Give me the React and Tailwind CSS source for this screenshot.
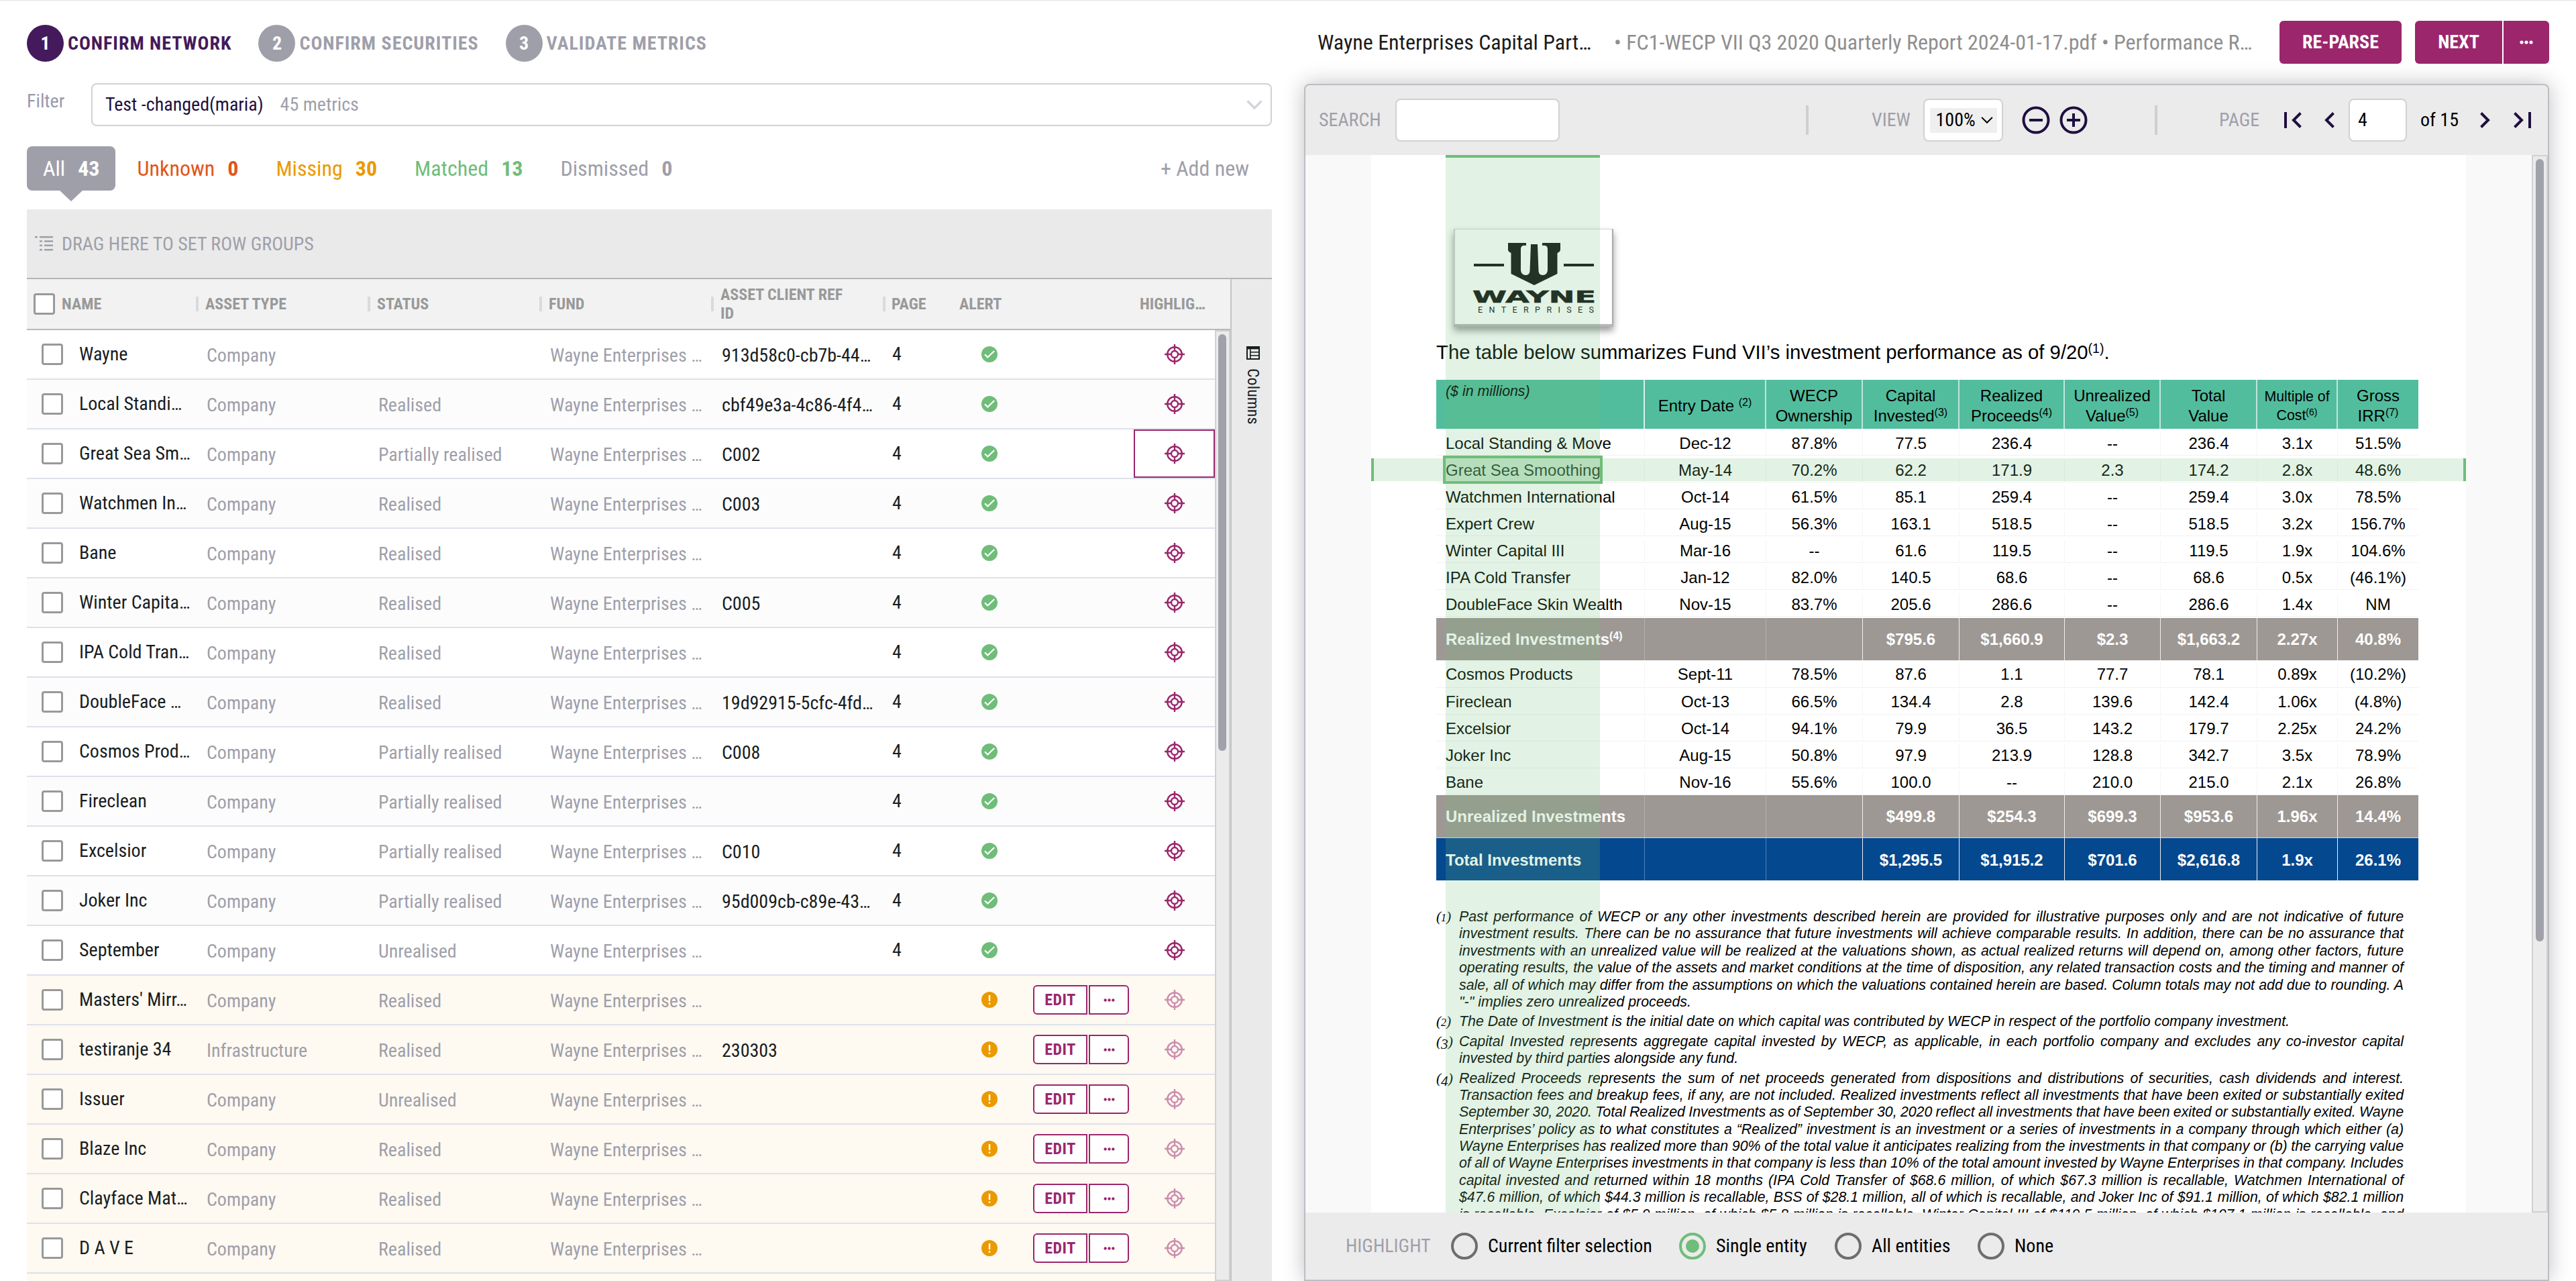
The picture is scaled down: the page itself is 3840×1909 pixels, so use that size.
import React from "react";

const COND = "font-['Roboto_Condensed',Roboto,sans-serif]";
const PDF = "font-['Liberation_Sans',Arial,sans-serif]";

/* ---------- icons ---------- */

const Dots = ({ className }) => (
  <svg viewBox="0 0 20 6" className={className} fill="currentColor">
    <circle cx="3" cy="3" r="2.6" />
    <circle cx="10" cy="3" r="2.6" />
    <circle cx="17" cy="3" r="2.6" />
  </svg>
);

const Target = ({ faded }) => (
  <svg
    viewBox="0 0 30 30"
    className={faded ? "size-[30px] text-[#9b266c] opacity-50" : "size-[30px] text-[#9b266c]"}
    fill="none"
    stroke="currentColor"
    strokeWidth="2.4"
  >
    <circle cx="15" cy="15" r="10.8" />
    <circle cx="15" cy="15" r="5" />
    <path d="M15 0v9.5M15 20.5v9.5M0 15h9.5M20.5 15h9.5" />
  </svg>
);

const Matched = () => (
  <svg viewBox="0 0 24 24" className="size-6">
    <circle cx="12" cy="12" r="12" fill="#6fbd79" />
    <path d="M5 12.2l4.300 4.300L19.200 7" fill="none" stroke="#fff" strokeWidth="2.200" />
  </svg>
);

const Missing = () => (
  <svg viewBox="0 0 24 24" className="size-6">
    <circle cx="12" cy="12" r="12" fill="#ea9a00" />
    <path d="M12 5v9M12 16.200v2.600" fill="none" stroke="#fff" strokeWidth="2.400" />
  </svg>
);

const ChevronDown = ({ className, width }) => (
  <svg viewBox="0 0 24 16" className={className} fill="none" stroke="currentColor" strokeWidth={width}>
    <path d="M1.500 2.500L12 13 22.500 2.500" />
  </svg>
);

const Chevron = ({ dir, bar }) => (
  <svg
    viewBox={bar ? "0 0 26 26" : "0 0 16 26"}
    className={bar ? "w-[26px] h-[26px] shrink-0 text-[#1f0f40]" : "w-[16px] h-[26px] shrink-0 text-[#1f0f40]"}
    fill="none"
    stroke="currentColor"
    strokeWidth="4"
  >
    {bar && dir === "left" && <path d="M2 1v24M24.500 2.500L14 13l10.500 10.500" />}
    {bar && dir === "right" && <path d="M24 1v24M1.500 2.500L12 13 1.500 23.500" />}
    {!bar && dir === "left" && <path d="M14.500 2.500L4 13l10.500 10.500" />}
    {!bar && dir === "right" && <path d="M1.500 2.500L12 13 1.500 23.500" />}
  </svg>
);

const Zoom = ({ plus }) => (
  <svg viewBox="0 0 42 42" className="size-[42px] shrink-0 text-[#1f0f40]" fill="none" stroke="currentColor" strokeWidth="4">
    <circle cx="21" cy="21" r="18.500" />
    <path d={plus ? "M11 21h20M21 11v20" : "M11 21h20"} />
  </svg>
);

const GroupIcon = () => (
  <svg viewBox="0 0 28 22" className="w-[28px] h-[22px] shrink-0" fill="#9f9faa">
    <path d="M0 0h4v2.500H0zM7 0h20v2.500H7zM7 6.200h4v2.500H7zM14 6.200h13v2.500H14zM7 12.600h4v2.500H7zM14 12.600h13v2.500H14zM7 19h4v2.500H7zM14 19h13v2.500H14z" />
  </svg>
);

const ColumnsIcon = () => (
  <svg viewBox="0 0 20 20" className="size-5" fill="none" stroke="#181d1f">
    <path d="M0 2.200h20" strokeWidth="4.400" />
    <path d="M1 3v16h18V3" strokeWidth="2" />
    <path d="M5 8.700h13M5 13.800h13M5.800 3v16" strokeWidth="1.600" />
  </svg>
);

const Logo = () => (
  <svg viewBox="0 0 238 146" className="w-[238px] h-[146px]" fill="#111">
    <path
      transform="translate(81 21)"
      d="M0 0H27V4Q19 3 19 9V41Q20 48 26 48Q32 48 32.500 42L34 2H44L45.500 42Q46 48 52 48Q58 48 59 41V9Q59 3 51 4V0H78V10Q78 13 73.500 15V46L39 63L4.500 46V15Q0 13 0 10Z"
    />
    <path d="M30 52h45v4H30zM164 52h45v4h-45z" />
    <text x="28" y="109.500" fontSize="24" fontWeight="700" fontFamily="'DejaVu Sans', sans-serif" textLength="184" lengthAdjust="spacingAndGlyphs" stroke="#111" strokeWidth="0.600">
      WAYNE
    </text>
    <text x="36" y="125" fontSize="12.500" fontFamily="Roboto, sans-serif" textLength="173">
      ENTERPRISES
    </text>
  </svg>
);

/* ---------- left panel ---------- */

const Step = ({ n, label, active }) => (
  <div className={`flex items-center text-[28px] font-bold tracking-[1px] ${active ? "text-[#441a5c]" : "text-[#9f9faa]"}`}>
    <span
      className={`flex size-[55px] items-center justify-center rounded-full tracking-normal text-white ${active ? "bg-[#441a5c]" : "bg-[#9f9faa]"}`}
    >
      {n}
    </span>
    <span className="ml-[6px]">{label}</span>
  </div>
);

const Tab = ({ label, count, color }) => (
  <div className={`flex h-full items-center gap-[19px] px-6 ${color}`}>
    <span>{label}</span>
    <b>{count}</b>
  </div>
);

const Checkbox = () => <span className="size-8 shrink-0 rounded-[4px] border-[3px] border-[#999] bg-white" />;

const Head = ({ className, sep, children }) => (
  <div className={`flex h-full shrink-0 items-center ${className}`}>
    <span className="min-w-0 flex-1">{children}</span>
    {sep && <span className="h-[22px] w-1 bg-[#dadada]" />}
  </div>
);

const F = "Wayne Enterprises …";
const rows = [
  ["Wayne", "Company", "", "913d58c0-cb7b-44…", true],
  ["Local Standi…", "Company", "Realised", "cbf49e3a-4c86-4f4…", true],
  ["Great Sea Sm…", "Company", "Partially realised", "C002", true],
  ["Watchmen In…", "Company", "Realised", "C003", true],
  ["Bane", "Company", "Realised", "", true],
  ["Winter Capita…", "Company", "Realised", "C005", true],
  ["IPA Cold Tran…", "Company", "Realised", "", true],
  ["DoubleFace …", "Company", "Realised", "19d92915-5cfc-4fd…", true],
  ["Cosmos Prod…", "Company", "Partially realised", "C008", true],
  ["Fireclean", "Company", "Partially realised", "", true],
  ["Excelsior", "Company", "Partially realised", "C010", true],
  ["Joker Inc", "Company", "Partially realised", "95d009cb-c89e-43…", true],
  ["September", "Company", "Unrealised", "", true],
  ["Masters' Mirr…", "Company", "Realised", "", false],
  ["testiranje 34", "Infrastructure", "Realised", "230303", false],
  ["Issuer", "Company", "Unrealised", "", false],
  ["Blaze Inc", "Company", "Realised", "", false],
  ["Clayface Mat…", "Company", "Realised", "", false],
  ["D A V E", "Company", "Realised", "", false],
];

const Row = ({ row, index }) => {
  const [name, type, status, ref, ok] = row;
  const bg = !ok ? "bg-[#fef9f1]" : index % 2 ? "bg-[#fcfcfc]" : "bg-white";
  return (
    <div className={`flex h-[74px] shrink-0 items-center whitespace-nowrap border-b-2 border-[#dde1ea] text-[28px] text-[#181d1f] ${bg}`}>
      <div className="flex w-[256px] shrink-0 items-center pl-[22px]">
        <Checkbox />
        <span className="ml-6">{name}</span>
      </div>
      <div className="w-[256px] shrink-0 pl-3 pt-[3px] text-[#9f9faa]">{type}</div>
      <div className="w-[256px] shrink-0 pl-3 pt-[3px] text-[#9f9faa]">{status}</div>
      <div className="w-[256px] shrink-0 pl-3 pt-[3px] text-[#9f9faa]">{F}</div>
      <div className="w-[256px] shrink-0 pl-3 pt-[3px]">{ref}</div>
      <div className="w-[100px] shrink-0 pl-[10px]">{ok ? "4" : ""}</div>
      <div className="flex w-[110px] shrink-0 justify-center">{ok ? <Matched /> : <Missing />}</div>
      <div className="w-[160px] shrink-0 pl-[10px]">
        {!ok && (
          <div className="flex h-11 text-[24px] font-bold text-[#9b266c]">
            <span className="flex w-[81px] items-center justify-center rounded-l-[6px] border-2 border-[#9b266c] bg-white tracking-[0.5px]">EDIT</span>
            <span className="ml-[2px] flex w-[60px] items-center justify-center rounded-r-[6px] border-2 border-[#9b266c] bg-white">
              <Dots className="h-[5px] w-[17px]" />
            </span>
          </div>
        )}
      </div>
      <div
        className={`flex h-full w-[121px] shrink-0 items-center justify-center ${index === 2 ? "border-2 border-[#9b266c]" : ""}`}
      >
        <Target faded={!ok} />
      </div>
    </div>
  );
};

const LeftPanel = () => (
  <div className="ml-10 flex h-full w-[1856px] shrink-0 flex-col">
    <div className="mt-[36px] flex h-[55px] shrink-0 gap-10">
      <Step n="1" label="CONFIRM NETWORK" active />
      <Step n="2" label="CONFIRM SECURITIES" />
      <Step n="3" label="VALIDATE METRICS" />
    </div>

    <div className="mt-8 flex h-16 shrink-0 text-[28px]">
      <span className="w-24 pt-[10px] text-[#9a98ab]">Filter</span>
      <div className="flex flex-1 items-center rounded-[8px] border-2 border-[#d2d2d4] pl-[19px] pr-3">
        <span className="text-[#1f0f40]">Test -changed(maria)</span>
        <span className="ml-[25px] text-[#9f9faa]">45 metrics</span>
        <ChevronDown className="ml-auto h-4 w-6 text-[#d6d4da]" width="3.5" />
      </div>
    </div>

    <div className="mt-[30px] flex h-[66px] shrink-0 items-center gap-2 text-[32px]">
      <div className="relative h-full rounded-[8px] bg-[#9f9faa]">
        <Tab label="All" count="43" color="text-white" />
        <svg viewBox="0 0 34 16" className="absolute left-[49px] top-[66px] h-4 w-[34px]" fill="#9f9faa">
          <path d="M0 0h34L17 16z" />
        </svg>
      </div>
      <Tab label="Unknown" count="0" color="text-[#e0561a]" />
      <Tab label="Missing" count="30" color="text-[#ea9a00]" />
      <Tab label="Matched" count="13" color="text-[#6fbd79]" />
      <Tab label="Dismissed" count="0" color="text-[#9f9faa]" />
      <span className="ml-auto mr-[34px] text-[#9f9faa]">+ Add new</span>
    </div>

    <div className="mt-7 flex h-[104px] shrink-0 items-center border-b-2 border-[#b4b4b4] bg-[#eaeaea] pl-3 text-[28px] text-[#9f9faa]">
      <GroupIcon />
      <span className="ml-3 pt-[1px]">DRAG HERE TO SET ROW GROUPS</span>
    </div>

    <div className="flex min-h-0 flex-1">
      <div className="flex w-[1794px] shrink-0 flex-col">
        <div className="flex h-[76px] shrink-0 items-center border-b-2 border-[#b9b9b9] bg-[#f2f2f2] text-[24px] font-bold leading-7 text-[#999]">
          <Head className="w-[256px] pl-[10px]" sep>
            <span className="flex items-center gap-[10px]">
              <Checkbox />
              NAME
            </span>
          </Head>
          <Head className="w-[256px] pl-[10px]" sep>ASSET TYPE</Head>
          <Head className="w-[256px] pl-[10px]" sep>STATUS</Head>
          <Head className="w-[256px] pl-[10px]" sep>FUND</Head>
          <Head className="w-[256px] pl-[10px]" sep>
            ASSET CLIENT REF
            <br />
            ID
          </Head>
          <Head className="w-[100px] pl-[9px]">PAGE</Head>
          <Head className="w-[270px] pl-[10px]">ALERT</Head>
          <Head className="w-[121px] pl-[9px]">HIGHLIG…</Head>
        </div>
        <div className="flex min-h-0 flex-1">
          <div className="flex w-[1771px] shrink-0 flex-col overflow-hidden">
            {rows.map((r, i) => (
              <Row key={r[0]} row={r} index={i} />
            ))}
            <div className="min-h-0 flex-1 bg-[#fef9f1]" />
          </div>
          <div className="flex-1 border-2 border-[#d1d1d3] bg-[#ebebeb] pl-[3px] pt-1">
            <div className="h-[621px] w-3 rounded-full bg-[#a1a1ab]" />
          </div>
        </div>
      </div>
      <div className="flex flex-1 flex-col items-center border-l-2 border-[#c4c4c4] bg-[#eaeaea] pl-1 pt-[100px]">
        <ColumnsIcon />
        <span className="mt-[13px] text-[24px] leading-[24px] text-[#181d1f] [writing-mode:vertical-rl]">Columns</span>
      </div>
    </div>
  </div>
);

/* ---------- document ---------- */

const W = ["w-[311px]", "w-[181px]", "w-[144px]", "w-[144px]", "w-[157px]", "w-[143px]", "w-[144px]", "w-[120px]", "w-[120px]"];

const DataRow = ({ cells, kind }) => {
  const style = {
    first: "h-10 pt-[6px]",
    top: "h-[41px] pt-[3px]",
    second: "h-10 pt-[3px]",
    gray: "h-[63px] bg-[#9e9894] font-bold text-white",
    gray2: "h-[64px] border-b border-[#d9d7d5] bg-[#9e9894] font-bold text-white",
    blue: "h-[63px] bg-[#04488f] font-bold text-white",
  }[kind];
  const strong = kind === "gray" || kind === "gray2";
  const line = strong ? "border-[#b5b0ad]" : kind === "blue" ? "border-[#4f7fb3]" : "border-[#f4f4f4]";
  const bright = kind === "blue" || strong ? "border-[#eeeeee]" : "border-[#f4f4f4]";
  const plain = !strong && kind !== "blue";
  return (
    <div className={`flex items-center ${style} ${plain ? "border-b border-[#f2f2f2]" : ""}`}>
      {cells.map((c, i) => (
        <div
          key={i}
          className={`flex h-full shrink-0 items-center ${i === 8 ? "" : "border-r"} ${i < 2 ? line : bright} ${W[i]} ${i === 0 ? "pl-[14px]" : "justify-center"} ${kind === "blue" ? "pt-[4px]" : strong ? "pt-[1px]" : ""}`}
        >
          <span>{c}</span>
        </div>
      ))}
    </div>
  );
};

const Sup = ({ children }) => <span className="relative -top-[8px] text-[16px] leading-none">{children}</span>;

const realized = [
  ["Local Standing & Move", "Dec-12", "87.8%", "77.5", "236.4", "--", "236.4", "3.1x", "51.5%"],
  ["Great Sea Smoothing", "May-14", "70.2%", "62.2", "171.9", "2.3", "174.2", "2.8x", "48.6%"],
  ["Watchmen International", "Oct-14", "61.5%", "85.1", "259.4", "--", "259.4", "3.0x", "78.5%"],
  ["Expert Crew", "Aug-15", "56.3%", "163.1", "518.5", "--", "518.5", "3.2x", "156.7%"],
  ["Winter Capital III", "Mar-16", "--", "61.6", "119.5", "--", "119.5", "1.9x", "104.6%"],
  ["IPA Cold Transfer", "Jan-12", "82.0%", "140.5", "68.6", "--", "68.6", "0.5x", "(46.1%)"],
  ["DoubleFace Skin Wealth", "Nov-15", "83.7%", "205.6", "286.6", "--", "286.6", "1.4x", "NM"],
];
const unrealized = [
  ["Cosmos Products", "Sept-11", "78.5%", "87.6", "1.1", "77.7", "78.1", "0.89x", "(10.2%)"],
  ["Fireclean", "Oct-13", "66.5%", "134.4", "2.8", "139.6", "142.4", "1.06x", "(4.8%)"],
  ["Excelsior", "Oct-14", "94.1%", "79.9", "36.5", "143.2", "179.7", "2.25x", "24.2%"],
  ["Joker Inc", "Aug-15", "50.8%", "97.9", "213.9", "128.8", "342.7", "3.5x", "78.9%"],
  ["Bane", "Nov-16", "55.6%", "100.0", "--", "210.0", "215.0", "2.1x", "26.8%"],
];

const HeadCell = ({ i, children, small }) => (
  <div
    className={`flex h-full shrink-0 items-center justify-center pt-[4px] text-center ${i === 8 ? "" : "border-r-2 border-[#bfe6da]"} ${W[i]} ${small ? "text-[21.330px] leading-[28px]" : "leading-[30px]"}`}
  >
    <div>{children}</div>
  </div>
);

const notes = [
  ["1", [
    "Past performance of WECP or any other investments described herein are provided for illustrative purposes only and are not indicative of future",
    "investment results. There can be no assurance that future investments will achieve comparable results. In addition, there can be no assurance that",
    "investments with an unrealized value will be realized at the valuations shown, as actual realized returns will depend on, among other factors, future",
    "operating results, the value of the assets and market conditions at the time of disposition, any related transaction costs and the timing and manner of",
    "sale, all of which may differ from the assumptions on which the valuations contained herein are based. Column totals may not add due to rounding. A",
    "\"-\" implies zero unrealized proceeds.",
  ]],
  ["2", ["The Date of Investment is the initial date on which capital was contributed by WECP in respect of the portfolio company investment."]],
  ["3", [
    "Capital Invested represents aggregate capital invested by WECP, as applicable, in each portfolio company and excludes any co-investor capital",
    "invested by third parties alongside any fund.",
  ]],
  ["4", [
    "Realized Proceeds represents the sum of net proceeds generated from dispositions and distributions of securities, cash dividends and interest.",
    "Transaction fees and breakup fees, if any, are not included. Realized investments reflect all investments that have been exited or substantially exited",
    "September 30, 2020. Total Realized Investments as of September 30, 2020 reflect all investments that have been exited or substantially exited. Wayne",
    "Enterprises’ policy as to what constitutes a “Realized” investment is an investment or a series of investments in a company through which either (a)",
    "Wayne Enterprises has realized more than 90% of the total value it anticipates realizing from the investments in that company or (b) the carrying value",
    "of all of Wayne Enterprises investments in that company is less than 10% of the total amount invested by Wayne Enterprises in that company. Includes",
    "capital invested and returned within 18 months (IPA Cold Transfer of $68.6 million, of which $67.3 million is recallable, Watchmen International of",
    "$47.6 million, of which $44.3 million is recallable, BSS of $28.1 million, all of which is recallable, and Joker Inc of $91.1 million, of which $82.1 million",
    "is recallable, Excelsior of $5.9 million, of which $5.8 million is recallable, Winter Capital III of $119.5 million, of which $107.1 million is recallable, and",
  ], true],
];

const Marker = ({ n }) => (
  <span className="w-[34px] shrink-0 font-['Liberation_Serif',serif]">
    (<span className={n < "3" ? "text-[16px] leading-none" : "relative top-[4px] leading-none"}>{n}</span>)
  </span>
);

const Document = () => (
  <div className={`relative w-[1632px] shrink-0 overflow-hidden bg-white pl-[97px] text-[24px] text-black ${PDF}`}>
    <div className="ml-[26px] mt-[110px] h-[146px] w-[238px] bg-white shadow-[0_6px_10px_rgba(0,0,0,0.4),inset_0_-4px_1px_#b5b5b5,inset_-2px_0_1px_#a8a8a8,inset_2px_0_1px_#cfcfcf,inset_0_1px_1px_#dddddd]">
      <Logo />
    </div>
    <p className="mt-[18px] h-10 whitespace-nowrap text-[29.300px] leading-10">
      The table below summarizes Fund VII’s investment performance as of 9/20
      <span className="relative -top-[9px] text-[19.500px] leading-none">(1)</span>.
    </p>

    <div className="mt-[21px] w-[1464px] whitespace-nowrap">
      <div className="flex h-[73px] bg-[#52bd9d]">
        <div className="w-[311px] shrink-0 border-r-2 border-[#d9f0e9] pl-[14px] pt-[3px] text-[21.330px] italic leading-[28px]">($ in millions)</div>
        <HeadCell i={1}>Entry Date <Sup>(2)</Sup></HeadCell>
        <HeadCell i={2}>WECP<br />Ownership</HeadCell>
        <HeadCell i={3}>Capital<br />Invested<Sup>(3)</Sup></HeadCell>
        <HeadCell i={4}>Realized<br />Proceeds<Sup>(4)</Sup></HeadCell>
        <HeadCell i={5}>Unrealized<br />Value<Sup>(5)</Sup></HeadCell>
        <HeadCell i={6}>Total<br />Value</HeadCell>
        <HeadCell i={7} small>Multiple of<br />Cost<span className="relative -top-[7px] text-[14px] leading-none">(6)</span></HeadCell>
        <HeadCell i={8}>Gross<br />IRR<Sup>(7)</Sup></HeadCell>
      </div>
      {realized.map((r) => (
        <DataRow key={r[0]} cells={r} kind="first" />
      ))}
      <div className="h-[2px]" />
      <DataRow
        kind="gray"
        cells={[<>Realized Investments<Sup>(4)</Sup></>, "", "", "$795.6", "$1,660.9", "$2.3", "$1,663.2", "2.27x", "40.8%"]}
      />
      {unrealized.map((r, i) => (
        <DataRow key={r[0]} cells={r} kind={i === 0 ? "top" : "second"} />
      ))}
      <DataRow kind="gray2" cells={["Unrealized Investments", "", "", "$499.8", "$254.3", "$699.3", "$953.6", "1.96x", "14.4%"]} />
      <DataRow kind="blue" cells={["Total Investments", "", "", "$1,295.5", "$1,915.2", "$701.6", "$2,616.8", "1.9x", "26.1%"]} />
    </div>

    <div className="mt-[42px] flex flex-col gap-[4px] text-[21.330px] italic leading-[25.400px]">
      {notes.map(([n, lines, open]) => (
        <div key={n} className="flex">
          <Marker n={n} />
          <div className="w-[1408px] shrink-0">
            {lines.map((l, i) => (
              <div
                key={i}
                className={
                  open || i < lines.length - 1
                    ? "h-[25.400px] [text-align-last:justify] [word-spacing:-1.500px]"
                    : "h-[25.400px] whitespace-nowrap"
                }
              >
                {l}
              </div>
            ))}
          </div>
        </div>
      ))}
    </div>

    <div className="absolute left-[111px] top-0 h-full w-[230px] border-t-4 border-[#6fbd79] bg-[#6fbd79]/20" />
    <div className="absolute left-0 top-[452px] h-[34px] w-full border-x-4 border-[#6fbd79] bg-[#6fbd79]/20" />
    <div className="absolute left-[107px] top-[448px] h-[42px] w-[238px] border-4 border-[#6fbd79] bg-[#6fbd79]/20" />
  </div>
);

/* ---------- right panel ---------- */

const Radio = ({ label, on, className }) => (
  <div className={`flex items-center ${className}`}>
    <span className={`flex size-10 items-center justify-center rounded-full border-4 ${on ? "border-[#6fbd79]" : "border-[#6e6e6e]"}`}>
      {on && <span className="size-5 rounded-full bg-[#6fbd79]" />}
    </span>
    <span className="ml-[15px] text-black">{label}</span>
  </div>
);

const RightPanel = () => (
  <div className="ml-12 flex h-full w-[1856px] shrink-0 flex-col">
    <div className="mt-[30px] flex h-16 shrink-0 items-center whitespace-nowrap text-[32px]">
      <span className="w-[462px] shrink-0 pl-5 text-[#1b1b1b]">Wayne Enterprises Capital Part…</span>
      <span className="text-[#8f8f8f]">• FC1-WECP VII Q3 2020 Quarterly Report 2024-01-17.pdf • Performance R…</span>
      <div className="ml-auto flex h-full gap-5 text-[28px] font-bold text-white">
        <span className="flex w-[182px] items-center justify-center rounded-[6px] bg-[#9b266c]">RE-PARSE</span>
        <div className="flex gap-[2px]">
          <span className="flex w-[130px] items-center justify-center rounded-l-[6px] bg-[#9b266c]">NEXT</span>
          <span className="flex w-[68px] items-center justify-center rounded-r-[6px] bg-[#9b266c]">
            <Dots className="h-[6px] w-[20px]" />
          </span>
        </div>
      </div>
    </div>

    <div className="mt-[30px] flex h-[1784px] shrink-0 flex-col overflow-hidden rounded-t-[8px] border-2 border-[#c0bbc4] bg-[#ebebeb] shadow-[0_0_32px_rgba(0,0,0,0.25)]">
      <div className="flex h-[104px] shrink-0 items-center whitespace-nowrap pl-5 text-[28px] text-[#9f9faa]">
        <span className="w-[114px] shrink-0">SEARCH</span>
        <span className="h-16 w-[245px] shrink-0 rounded-[8px] border-2 border-[#d1d1d3] bg-white" />
        <span className="ml-[367px] h-11 w-1 shrink-0 bg-[#cfcfcf]" />
        <span className="ml-[94px] w-[77px] shrink-0">VIEW</span>
        <span className="flex h-16 w-[119px] shrink-0 items-center justify-center rounded-[8px] border-2 border-[#d1d1d3] bg-white">
          <span className="flex h-[37px] w-[100px] items-center justify-between bg-[#efefef] pl-[9px] pr-[6px] text-black">
            100%
            <ChevronDown className="h-3 w-[18px]" width="2.8" />
          </span>
        </span>
        <span className="ml-[28px] flex gap-[14px]">
          <Zoom />
          <Zoom plus />
        </span>
        <span className="ml-[100px] h-11 w-1 shrink-0 bg-[#cfcfcf]" />
        <span className="ml-[92px] w-[97px] shrink-0">PAGE</span>
        <Chevron dir="left" bar />
        <span className="w-[33px] shrink-0" />
        <Chevron dir="left" />
        <span className="ml-[21px] flex h-16 w-[87px] shrink-0 items-center rounded-[8px] border-2 border-[#d1d1d3] bg-white pl-3 text-black">4</span>
        <span className="ml-5 w-[89px] shrink-0 text-black">of 15</span>
        <Chevron dir="right" />
        <span className="w-[34px] shrink-0" />
        <Chevron dir="right" bar />
      </div>

      <div className="flex h-[1576px] shrink-0 bg-[#f9f9f9]">
        <div className="w-[98px] shrink-0" />
        <Document />
        <div className="w-[98px] shrink-0" />
        <div className="w-6 shrink-0 border-2 border-[#d1d1d3] bg-[#ebebeb] pl-1 pt-1">
          <div className="h-[1166px] w-3 rounded-full bg-[#a1a1ab]" />
        </div>
      </div>

      <div className="flex flex-1 items-center pl-[60px] text-[28px] text-[#9f9faa]">
        <span className="w-[157px]">HIGHLIGHT</span>
        <Radio className="w-[340px]" label="Current filter selection" />
        <Radio className="w-[232px]" label="Single entity" on />
        <Radio className="w-[213px]" label="All entities" />
        <Radio label="None" />
      </div>
    </div>
  </div>
);

export default function App() {
  return (
    <div className={`flex h-[1909px] w-[3840px] overflow-hidden border-t border-[#e4e4e4] bg-white leading-[1.2] ${COND}`}>
      <LeftPanel />
      <RightPanel />
    </div>
  );
}
